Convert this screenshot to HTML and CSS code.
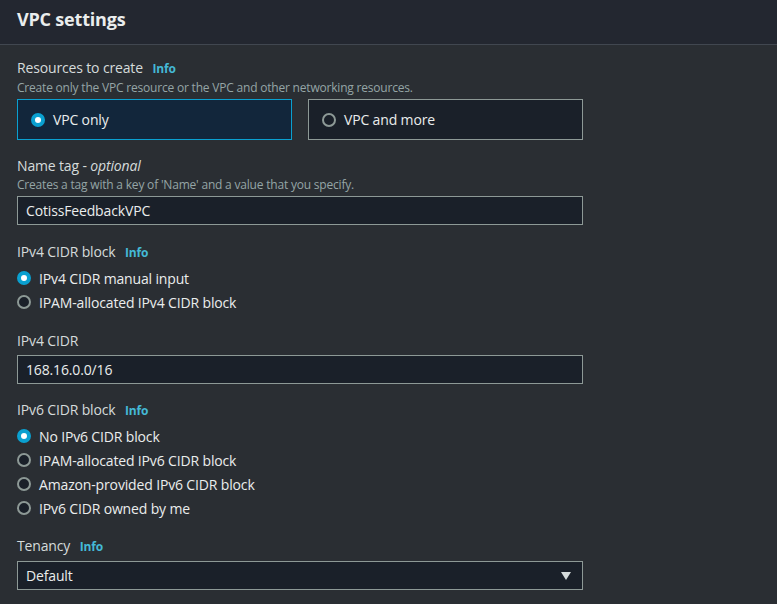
FILE: index.html
```html
<!DOCTYPE html>
<html lang="en">
<head>
<meta charset="utf-8">
<title>VPC settings</title>
<link rel="stylesheet" href="styles.css">
</head>
<body>
<div class="panel">
  <header class="panel-header"><h2>VPC settings</h2></header>
  <div class="panel-body">
    <div class="field">
      <div class="label">Resources to create <a class="info">Info</a></div>
      <div class="desc">Create only the VPC resource or the VPC and other networking resources.</div>
      <div class="tiles">
        <div class="tile selected"><span class="radio checked"></span><span>VPC only</span></div>
        <div class="tile"><span class="radio"></span><span>VPC and more</span></div>
      </div>
    </div>

    <div class="field">
      <div class="label">Name tag - <i>optional</i></div>
      <div class="desc">Creates a tag with a key of 'Name' and a value that you specify.</div>
      <div class="input">CotissFeedbackVPC</div>
    </div>

    <div class="field spaced">
      <div class="label">IPv4 CIDR block <a class="info">Info</a></div>
      <div class="radios">
        <div class="radio-row"><span class="radio checked"></span><span>IPv4 CIDR manual input</span></div>
        <div class="radio-row"><span class="radio"></span><span>IPAM-allocated IPv4 CIDR block</span></div>
      </div>
    </div>

    <div class="field spaced">
      <div class="label">IPv4 CIDR</div>
      <div class="input gap">168.16.0.0/16</div>
    </div>

    <div class="field">
      <div class="label">IPv6 CIDR block <a class="info">Info</a></div>
      <div class="radios">
        <div class="radio-row"><span class="radio checked"></span><span>No IPv6 CIDR block</span></div>
        <div class="radio-row"><span class="radio"></span><span>IPAM-allocated IPv6 CIDR block</span></div>
        <div class="radio-row"><span class="radio"></span><span>Amazon-provided IPv6 CIDR block</span></div>
        <div class="radio-row"><span class="radio"></span><span>IPv6 CIDR owned by me</span></div>
      </div>
    </div>

    <div class="field">
      <div class="label">Tenancy <a class="info">Info</a></div>
      <div class="input gap select"><span>Default</span><span class="caret"></span></div>
    </div>
  </div>
</div>
</body>
</html>
```

FILE: styles.css
```css
* { box-sizing: border-box; }
html, body {
  margin: 0;
  padding: 0;
  background: #2a2e33;
}
body {
  font-family: "Open Sans", "Noto Sans", sans-serif;
  color: #d5dbdb;
  font-size: 14px;
  letter-spacing: -0.15px;
}
.panel { width: 777px; }
.panel-header {
  height: 45px;
  background: #232730;
  border-bottom: 1px solid #414750;
  padding: 0 17px;
  display: flex;
  align-items: center;
}
.panel-header h2 {
  margin: 0;
  font-size: 18px;
  font-weight: 700;
  color: #eaeded;
  line-height: 22px;
  margin-top: -7px;
  letter-spacing: -0.2px;
}
.panel-body {
  padding: 13px 17px 0;
  display: flex;
  flex-direction: column;
  gap: 16px;
  width: 600px;
}
.field { display: flex; flex-direction: column; }
.field.spaced { margin-top: 1px; }
.label {
  line-height: 20px;
  font-size: 14px;
  color: #d5dbdb;
}
.label i { font-style: italic; }
.info {
  color: #44b9d6;
  font-weight: 700;
  font-size: 12px;
  margin-left: 6px;
}
.desc {
  margin-top: 1px;
  font-size: 12px;
  line-height: 16px;
  color: #95a5a6;
  letter-spacing: -0.2px;
}
.tiles {
  margin-top: 3px;
  display: flex;
  gap: 16px;
  width: 566px;
}
.tile {
  flex: 1;
  height: 41px;
  border: 1px solid #8d9996;
  background: #1a2029;
  display: flex;
  align-items: center;
  padding-left: 13px;
  gap: 8px;
  color: #eaeded;
}
.tile.selected {
  background: #12263b;
  border-color: #0aa0d0;
}
.radio {
  width: 14px;
  height: 14px;
  border-radius: 50%;
  border: 2px solid #8d9996;
  background: #1a2029;
  flex: none;
}
.radio.checked {
  border: 4.5px solid #0aa0d0;
  background: #ffffff;
}
.input {
  margin-top: 3px;
  width: 566px;
  height: 29px;
  border: 1px solid #8d9996;
  background: #1a2029;
  padding: 0 8px;
  display: flex;
  align-items: center;
  color: #eaeded;
  font-size: 14px;
}
.input.gap { margin-top: 4px; }
.select { justify-content: space-between; padding-right: 11px; }
.caret {
  width: 0;
  height: 0;
  border-left: 5.5px solid transparent;
  border-right: 5.5px solid transparent;
  border-top: 8px solid #d5dbdb;
}
.radios {
  margin-top: 3px;
  display: flex;
  flex-direction: column;
}
.radio-row {
  height: 24px;
  display: flex;
  align-items: center;
  gap: 8px;
  color: #eaeded;
}
```
